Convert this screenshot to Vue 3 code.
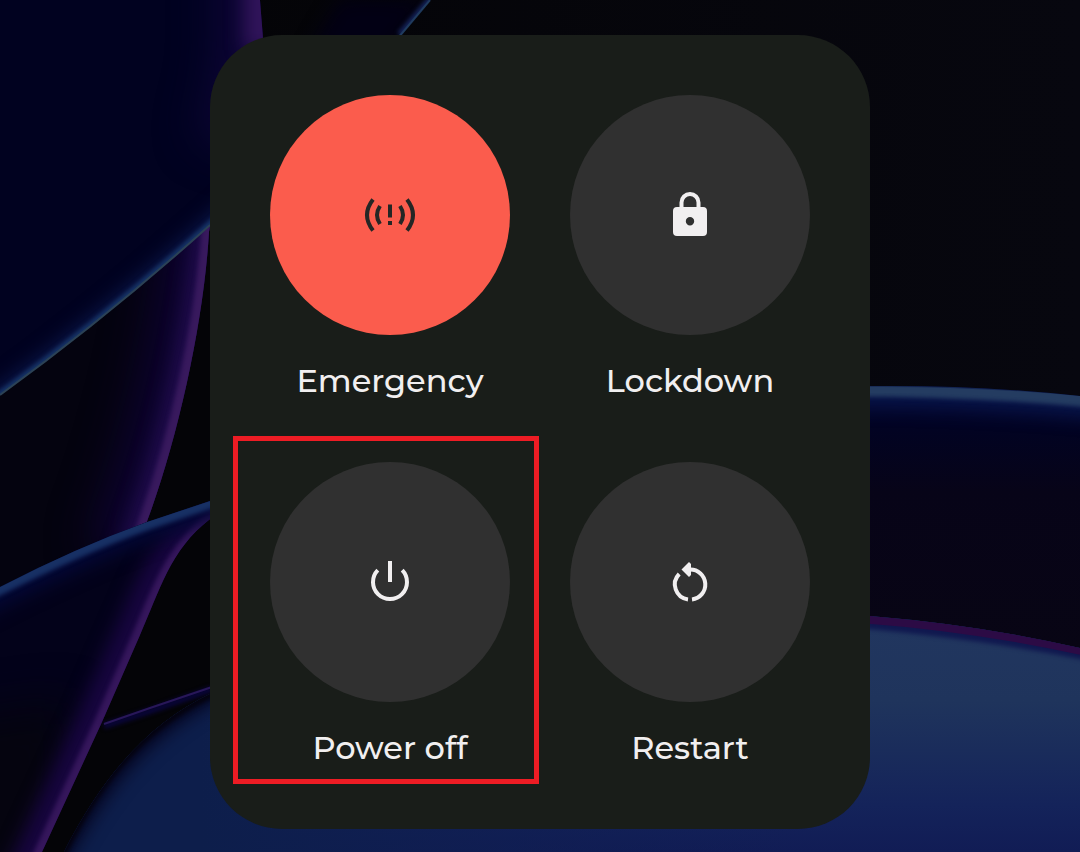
<script setup>
const actions = [
  { id: 'emergency', label: 'Emergency' },
  { id: 'lockdown', label: 'Lockdown' },
  { id: 'power', label: 'Power off', highlighted: true },
  { id: 'restart', label: 'Restart' },
]
</script>

<template>
  <main class="screen">
    <svg class="wallpaper" viewBox="0 0 1080 852" preserveAspectRatio="xMidYMid slice" aria-hidden="true">
      <defs>
        <filter id="soft3" filterUnits="userSpaceOnUse" x="-100" y="-100" width="1280" height="1052" color-interpolation-filters="sRGB"><feGaussianBlur stdDeviation="2" /></filter>
        <filter id="soft10" filterUnits="userSpaceOnUse" x="-100" y="-100" width="1280" height="1052" color-interpolation-filters="sRGB"><feGaussianBlur stdDeviation="9" /></filter>
        <filter id="soft25" filterUnits="userSpaceOnUse" x="-100" y="-100" width="1280" height="1052" color-interpolation-filters="sRGB"><feGaussianBlur stdDeviation="22" /></filter>
        <linearGradient id="night" x1="0" x2="1">
          <stop offset="0.2" stop-color="#040407" />
          <stop offset="1" stop-color="#07070f" />
        </linearGradient>
        <linearGradient id="plain" x1="0" y1="386" x2="0" y2="650" gradientUnits="userSpaceOnUse">
          <stop offset="0" stop-color="#020530" />
          <stop offset="0.17" stop-color="#020322" />
          <stop offset="0.4" stop-color="#070418" />
          <stop offset="1" stop-color="#080514" />
        </linearGradient>
        <linearGradient id="dome" x1="0" y1="620" x2="0" y2="852" gradientUnits="userSpaceOnUse">
          <stop offset="0" stop-color="#21365f" />
          <stop offset="0.35" stop-color="#1f345c" />
          <stop offset="0.8" stop-color="#14235a" />
          <stop offset="1" stop-color="#111c55" />
        </linearGradient>
        <linearGradient id="domeLeft" x1="200" y1="0" x2="800" y2="0" gradientUnits="userSpaceOnUse">
          <stop offset="0" stop-color="#0d1e4b" />
          <stop offset="1" stop-color="#0f1e52" stop-opacity="0" />
        </linearGradient>
        <clipPath id="petal"><path d="M0 0H260L263 38C260 100 222 160 209 232C204 320 178 440 146 524L0 600Z" /></clipPath>
        <clipPath id="sheet"><path d="M0 0H430L400 35Q320 135 210 225Q110 315 0 395Z" /></clipPath>
        <clipPath id="fold"><path d="M0 587Q75 548 147 522L210 501V519C170 550 160 590 140 635L102 722L42 852H0Z" /></clipPath>
        <clipPath id="horizon"><path d="M700 386H870Q980 385 1080 396V852H700Z" /></clipPath>
        <clipPath id="ball"><path d="M64 852C105 770 155 720 210 694Q500 590 870 616Q980 625 1080 648V852Z" /></clipPath>
      </defs>

      <rect width="1080" height="852" fill="url(#night)" />

      <g clip-path="url(#sheet)">
        <path d="M340 0H430L400 35Q320 135 210 225Z" fill="#020014" filter="url(#soft10)" />
        <path d="M436 -7L400 35" fill="none" stroke="#14235a" stroke-width="7" filter="url(#soft3)" />
      </g>
      <path d="M430 0L398 38" stroke="#1f3a5d" stroke-width="2" />

      <g clip-path="url(#petal)">
        <rect width="270" height="600" fill="#04030f" />
        <path d="M217 160C204 320 178 440 130 564" fill="none" stroke="#0d0230" stroke-width="90" filter="url(#soft25)" />
        <path d="M217 160C204 320 178 440 130 564" fill="none" stroke="#200c4c" stroke-width="32" filter="url(#soft10)" />
        <path d="M210 225C204 320 178 440 140 540" fill="none" stroke="#38195d" stroke-width="16" filter="url(#soft3)" />
        <g clip-path="url(#sheet)">
          <rect width="270" height="400" fill="#010220" />
          <path d="M262 -60V30C262 90 250 120 240 150" fill="none" stroke="#0d0536" stroke-width="90" filter="url(#soft25)" />
          <path d="M262 -60V50" fill="none" stroke="#31145a" stroke-width="36" filter="url(#soft10)" />
          <path d="M-40 424L0 395Q110 315 210 225L250 189" fill="none" stroke="#0a1549" stroke-width="16" filter="url(#soft10)" />
          <path d="M-40 424L0 395Q110 315 210 225L250 189" fill="none" stroke="#163467" stroke-width="8" filter="url(#soft3)" />
        </g>
      </g>
      <path d="M0 395Q110 315 210 225" fill="none" stroke="#2b4155" stroke-width="2" />

      <g clip-path="url(#fold)">
        <rect y="480" width="220" height="372" fill="#03021a" />
        <path d="M-60 720V920H60L70 700Z" fill="#05040f" filter="url(#soft25)" />
        <path d="M240 500C170 550 160 590 140 635L102 722L20 900" fill="none" stroke="#17053f" stroke-width="50" filter="url(#soft10)" />
        <path d="M225 507C170 550 160 590 140 635L102 722L36 865" fill="none" stroke="#35165b" stroke-width="15" filter="url(#soft3)" />
        <path d="M-50 612Q75 548 147 522L260 484" fill="none" stroke="#030735" stroke-width="38" filter="url(#soft10)" />
        <path d="M-20 599Q75 550 147 524L230 496" fill="none" stroke="#173064" stroke-width="12" filter="url(#soft3)" />
      </g>

      <path d="M104 726L150 711L212 689" fill="none" stroke="#09053b" stroke-width="6" filter="url(#soft3)" />
      <path d="M104 724L150 708L212 687" fill="none" stroke="#281759" stroke-width="2" />

      <g clip-path="url(#horizon)">
        <rect x="700" y="380" width="380" height="472" fill="url(#plain)" />
        <path d="M820 392Q980 391 1110 405" fill="none" stroke="#08154a" stroke-width="28" filter="url(#soft10)" />
        <path d="M820 391Q980 390 1110 404" fill="none" stroke="#243c61" stroke-width="11" filter="url(#soft3)" />
        <path d="M860 390Q980 389 1090 400" fill="none" stroke="#243c61" stroke-width="6" />
      </g>

      <g clip-path="url(#ball)">
        <rect y="580" width="1080" height="272" fill="url(#dome)" />
        <rect y="580" width="1080" height="272" fill="url(#domeLeft)" />
        <path d="M34 900C95 770 145 720 240 674" fill="none" stroke="#04031c" stroke-width="24" filter="url(#soft10)" />
        <path d="M54 860C95 770 145 720 210 689" fill="none" stroke="#04030f" stroke-width="18" filter="url(#soft3)" />
        <path d="M820 616Q980 628 1110 656" fill="none" stroke="#10184f" stroke-width="18" filter="url(#soft3)" />
        <path d="M860 619Q980 628 1090 653" fill="none" stroke="#2c0b45" stroke-width="8" />
      </g>
    </svg>

    <section class="panel" aria-label="Power menu">
      <button
        v-for="action in actions"
        :key="action.id"
        type="button"
        class="action"
        :class="{ highlighted: action.highlighted }"
      >
        <span class="disc" :class="action.id">
          <svg v-if="action.id === 'emergency'" class="icon" viewBox="0 0 80 70" aria-hidden="true">
            <g fill="none" stroke="currentColor" stroke-width="4">
              <path d="M23 19.5Q11 35 23 50.5M57 19.5Q69 35 57 50.5" />
              <path d="M30 26Q24 35 30 44M50 26Q56 35 50 44" />
            </g>
            <path d="M38 24.500h4v13h-4zM38 41h4v4h-4z" fill="currentColor" />
          </svg>
          <svg v-else-if="action.id === 'lockdown'" class="icon" viewBox="0 0 80 70" aria-hidden="true">
            <path d="M31.500 29V22.500a8.500 8.500 0 0 1 17 0V29" fill="none" stroke="currentColor" stroke-width="4" />
            <path fill="currentColor" fill-rule="evenodd" d="M27 27H53a4 4 0 0 1 4 4V52a4 4 0 0 1-4 4H27a4 4 0 0 1-4-4V31a4 4 0 0 1 4-4ZM40 37a4.200 4.200 0 1 0 0 8.400a4.200 4.200 0 0 0 0-8.400Z" />
          </svg>
          <svg v-else-if="action.id === 'power'" class="icon" viewBox="0 2 80 70" aria-hidden="true">
            <path d="M40 16V37M27.800 25.200A17 17 0 1 0 52.200 25.200" fill="none" stroke="currentColor" stroke-width="4" />
          </svg>
          <svg v-else class="icon" viewBox="0 2 80 70" aria-hidden="true">
            <path d="M29.200 29A15 15 0 0 0 38 54.400M42 54.400A15 15 0 0 0 40 24.500H37" fill="none" stroke="currentColor" stroke-width="4" />
            <path d="M31.500 24.500L39 17L41 19V30L39 32Z" fill="currentColor" />
          </svg>
        </span>
        <span class="label">{{ action.label }}</span>
      </button>
    </section>
  </main>
</template>

<style>
body {
  margin: 0;
  background: #050508;
}
</style>

<style scoped>
.screen {
  position: relative;
  box-sizing: border-box;
  min-height: 100vh;
  padding: 35px 20px 23px;
  display: flex;
  justify-content: center;
  align-items: flex-start;
  overflow: hidden;
  font-family: Montserrat, Lato, "Open Sans", sans-serif;
}

.wallpaper {
  position: absolute;
  inset: 0;
  width: 100%;
  height: 100%;
}

.panel {
  position: relative;
  display: grid;
  grid-template-columns: repeat(2, auto);
  gap: 60px;
  padding: 60px;
  border-radius: 72px;
  background: #191d19;
}

.action {
  position: relative;
  display: flex;
  flex-direction: column;
  align-items: center;
  gap: 25px;
  padding: 0;
  border: 0;
  background: none;
  color: #f1eff0;
  font: inherit;
  cursor: pointer;
}

.highlighted::after {
  content: "";
  position: absolute;
  inset: -26px -29px -15px -37px;
  border: 5px solid #ed1c24;
  pointer-events: none;
}

.disc {
  display: flex;
  align-items: center;
  justify-content: center;
  width: 240px;
  height: 240px;
  border-radius: 50%;
  background: #303030;
}

.disc.emergency {
  background: #fb5c4d;
  color: #242625;
}

.icon {
  width: 80px;
  height: 70px;
}

.label {
  font-size: 32px;
  font-weight: 500;
  line-height: 42px;
  white-space: nowrap;
}
</style>
